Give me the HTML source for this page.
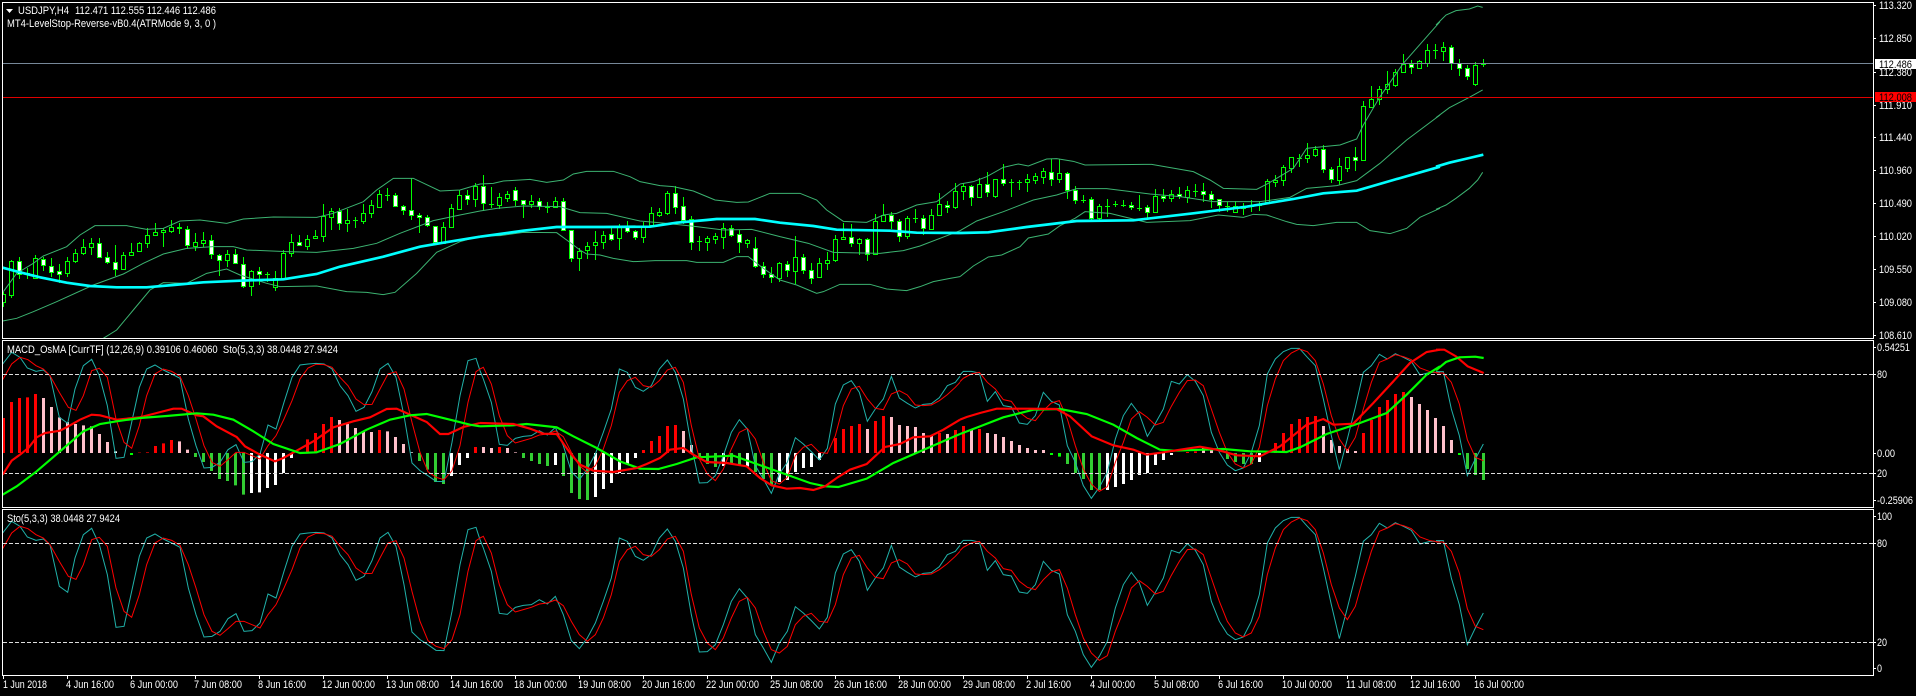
<!DOCTYPE html>
<html><head><meta charset="utf-8"><title>USDJPY,H4</title>
<style>
html,body{margin:0;padding:0;background:#000;width:1916px;height:696px;overflow:hidden}
svg{display:block}
text{font-family:"Liberation Sans",sans-serif;font-size:11px;fill:#fff}
.t{fill:none;stroke-width:3}
.b{fill:none;stroke:#3cb371;stroke-width:3}
.m{fill:none;stroke:#0ff;stroke-width:8}
.s{fill:none;stroke:#20b2aa;stroke-width:3}
.r{fill:none;stroke:#f00;stroke-width:3}
.R{fill:none;stroke:#f00;stroke-width:6.5}
.G{fill:none;stroke:#0f0;stroke-width:6.5}
.hr{stroke:#f00;stroke-width:9;fill:none}
.hp{stroke:#ffc0cb;stroke-width:9;fill:none}
.hw{stroke:#fff;stroke-width:9;fill:none}
.hg{stroke:#32cd32;stroke-width:9;fill:none}
.hb{stroke:#0f0;stroke-width:9;fill:none}
.w{stroke:#0f0;stroke-width:1;fill:none}
.cw{stroke:#0f0;stroke-width:1;fill:#fff}
.cb{stroke:#0f0;stroke-width:1;fill:#000}
.d{stroke:#ddd;stroke-width:1;stroke-dasharray:4 2;fill:none}
</style></head>
<body>
<svg width="1916" height="696" viewBox="0 0 1916 696" xmlns="http://www.w3.org/2000/svg">
<defs>
<g id="sto">
<g transform="translate(0 338) scale(.33333)">
<polyline class="s" points="8,585 35,550 60,565 82,597 108,607 130,603 150,620 178,745 203,763 225,660 250,590 275,571 298,620 322,710 348,868 372,865 395,760 418,655 440,600 465,588 490,603 515,615 540,628 565,750 588,830 612,897 636,895 660,880 684,842 708,827 732,880 756,878 780,855 804,768 828,780 852,700 876,625 900,588 924,585 948,583 972,585 996,600 1020,650 1044,680 1068,727 1092,715 1116,668 1140,600 1164,583 1188,625 1212,740 1236,882 1260,905 1284,920 1308,937 1332,938 1356,820 1380,680 1404,575 1428,568 1440,605"/>
<polyline class="r" points="8,632 35,585 60,565 84,572 108,590 130,600 150,620 178,670 205,715 228,724 250,680 275,605 298,598 322,625 348,750 372,820 395,838 418,770 440,680 465,615 490,600 515,607 540,622 565,680 588,750 612,830 636,880 660,892 684,872 708,850 732,850 756,860 780,870 804,830 828,800 852,750 876,695 900,630 924,597 948,586 972,587 996,595 1020,625 1044,650 1068,690 1092,707 1116,706 1140,660 1164,615 1188,608 1212,660 1236,760 1260,850 1284,908 1308,925 1332,932 1356,905 1380,830 1404,700 1428,608 1440,600"/>
</g>
<g transform="translate(480 338) scale(.33333)">
<polyline class="s" points="0,605 10,630 34,700 58,826 82,829 106,808 130,802 154,800 178,785 202,798 226,775 250,830 274,908 298,932 322,900 346,855 370,790 394,720 418,600 442,610 466,655 490,667 514,650 538,600 562,573 586,610 610,690 634,830 658,942 682,941 706,920 730,860 754,790 778,752 802,780 826,890 850,930 874,973 898,915 922,880 946,806 970,825 994,848 1018,873 1042,838 1066,705 1090,648 1114,635 1138,670 1162,757 1186,720 1210,690 1234,622 1258,687 1282,703 1306,717 1330,706 1354,704 1378,686 1402,650 1426,640 1440,622"/>
<polyline class="r" points="0,600 10,595 34,645 58,740 82,800 106,822 130,815 154,808 178,798 202,795 226,786 250,803 274,850 298,890 322,910 346,890 370,840 394,770 418,670 442,635 466,625 490,650 514,655 538,635 562,603 586,595 610,640 634,770 658,870 682,915 706,935 730,900 754,840 778,790 802,778 826,810 850,880 874,935 898,945 922,925 946,860 970,835 994,826 1018,850 1042,853 1066,800 1090,710 1114,660 1138,652 1162,690 1186,718 1210,722 1234,675 1258,665 1282,678 1306,708 1330,710 1354,708 1378,695 1402,677 1426,655 1440,640"/>
</g>
<g transform="translate(960 338) scale(.33333)">
<polyline class="s" points="0,618 10,607 34,607 58,612 82,697 106,668 130,710 154,714 178,762 202,766 226,740 250,670 274,697 298,708 322,830 346,880 370,950 394,988 418,955 442,910 466,810 490,740 514,703 538,735 562,802 586,763 610,720 634,637 658,645 682,617 706,637 730,680 754,790 778,850 802,888 826,905 850,897 874,850 898,770 922,615 946,570 970,548 994,538 1018,538 1042,565 1066,590 1090,690 1114,800 1138,902 1162,810 1186,715 1210,610 1234,590 1258,556 1282,570 1306,554 1330,565 1354,577 1380,618 1410,610 1440,610"/>
<polyline class="r" points="0,638 10,628 34,615 58,610 82,640 106,660 130,692 154,697 178,730 202,748 226,755 250,725 274,702 298,695 322,750 346,830 370,900 394,945 418,967 442,953 466,880 490,820 514,750 538,728 562,745 586,768 610,760 634,712 658,670 682,635 706,633 730,650 754,720 778,790 802,850 826,885 850,897 874,885 898,835 922,710 946,630 970,575 994,552 1018,540 1042,548 1066,575 1090,645 1114,740 1138,810 1162,845 1186,805 1210,720 1234,640 1258,580 1282,570 1306,557 1330,563 1354,572 1380,597 1410,608 1440,612"/>
</g>
<g transform="translate(1436 338) scale(.33333)">
<polyline class="s" points="0,608 22,608 46,720 70,800 94,920 118,870 142,825"/>
<polyline class="r" points="0,612 22,612 46,640 70,705 94,812 118,865 142,875"/>
</g>
</g>
</defs>

<rect width="1916" height="696" fill="#000"/>

<!-- candles -->
<g>
<path class="w" d="M3.5 292V307M11.5 260V298M19.5 257V279M27.5 268V279M25 273.5H30M35.5 255V279M43.5 257V271M51.5 258V277M59.5 264V283M67.5 257V277M75.5 249V263M83.5 239V255M91.5 238V255M99.5 238V257M107.5 252V264M115.5 245V276M123.5 252V269M131.5 243V256M139.5 242V252M147.5 228V248M155.5 223V236M163.5 228V247M171.5 220V233M179.5 223V234M187.5 226V249M195.5 233V251M203.5 232V247M211.5 235V259M219.5 254V276M227.5 250V267M235.5 249V264M243.5 257V288M251.5 270V296M259.5 267V285M267.5 272V282M265 274.5H270M275.5 271V291M283.5 250V278M291.5 234V257M299.5 235V246M307.5 235V250M315.5 230V239M323.5 204V242M331.5 208V230M339.5 208V230M347.5 209V232M355.5 217V228M353 220.5H358M363.5 204V224M371.5 200V218M379.5 190V207M387.5 188V201M385 195.5H390M395.5 193V207M403.5 205V215M411.5 178V220M419.5 213V233M427.5 215V227M435.5 226V243M443.5 222V243M451.5 204V227M459.5 190V210M467.5 190V205M475.5 183V207"/>
<path class="cw" d="M17.5 261.5h4v13h-4zM41.5 259.5h4v6h-4zM49.5 266.5h4v6h-4zM57.5 271.5h4v3h-4zM97.5 243.5h4v14h-4zM105.5 257.5h4v5h-4zM113.5 262.5h4v7h-4zM177.5 227.5h4v1h-4zM185.5 229.5h4v16h-4zM209.5 240.5h4v14h-4zM217.5 255.5h4v5h-4zM233.5 254.5h4v9h-4zM241.5 264.5h4v22h-4zM257.5 271.5h4v3h-4zM297.5 242.5h4v3h-4zM337.5 211.5h4v12h-4zM393.5 195.5h4v11h-4zM401.5 206.5h4v4h-4zM409.5 210.5h4v5h-4zM417.5 215.5h4v2h-4zM425.5 217.5h4v8h-4zM433.5 226.5h4v16h-4zM465.5 195.5h4v4h-4z"/>
<path class="cb" d="M1.5 294.5h4v8h-4zM9.5 261.5h4v34h-4zM33.5 258.5h4v20h-4zM65.5 261.5h4v12h-4zM73.5 253.5h4v8h-4zM81.5 247.5h4v6h-4zM89.5 243.5h4v4h-4zM121.5 255.5h4v14h-4zM129.5 252.5h4v3h-4zM137.5 243.5h4v8h-4zM145.5 235.5h4v8h-4zM153.5 232.5h4v3h-4zM161.5 230.5h4v2h-4zM169.5 227.5h4v4h-4zM193.5 242.5h4v4h-4zM201.5 240.5h4v3h-4zM225.5 254.5h4v6h-4zM249.5 271.5h4v15h-4zM273.5 278.5h4v9h-4zM281.5 253.5h4v25h-4zM289.5 242.5h4v11h-4zM305.5 239.5h4v7h-4zM313.5 236.5h4v2h-4zM321.5 216.5h4v20h-4zM329.5 211.5h4v6h-4zM345.5 220.5h4v3h-4zM361.5 213.5h4v8h-4zM369.5 205.5h4v8h-4zM377.5 194.5h4v13h-4zM441.5 227.5h4v16h-4zM449.5 208.5h4v19h-4zM457.5 195.5h4v14h-4zM473.5 186.5h4v13h-4z"/>
</g>
<g transform="translate(480 0)">
<path class="w" d="M3.5 175V211M11.5 187V208M9 204.5H14M19.5 193V209M27.5 191V202M35.5 187V206M43.5 200V218M51.5 195V208M59.5 198V210M67.5 202V213M65 207.5H70M75.5 197V207M83.5 198V231M91.5 230V262M99.5 248V271M107.5 242V259M115.5 231V260M123.5 231V249M131.5 228V241M139.5 224V250M147.5 221V233M155.5 230V240M163.5 222V243M171.5 207V227M179.5 208V217M187.5 191V215M195.5 186V214M203.5 197V224M211.5 216V250M219.5 236V251M217 241.5H222M227.5 236V251M235.5 233V244M243.5 223V249M251.5 225V237M259.5 230V253M267.5 239V248M275.5 237V268M283.5 262V278M291.5 267V283M299.5 262V282M307.5 261V277M315.5 236V284M323.5 254V274M331.5 263V284M339.5 258V277M347.5 252V270M355.5 235V262M363.5 223V239M371.5 224V247M379.5 238V255M387.5 238V261M395.5 214V255M403.5 204V222M411.5 212V229M419.5 219V242M427.5 216V239M435.5 209V223M433 218.5H438M443.5 215V235M451.5 209V230M459.5 193V216M467.5 201V213M475.5 183V209"/>
<path class="cw" d="M1.5 186.5h4v17h-4zM33.5 190.5h4v10h-4zM41.5 200.5h4v4h-4zM49.5 201.5h4v3h-4zM57.5 201.5h4v5h-4zM81.5 201.5h4v29h-4zM89.5 230.5h4v28h-4zM129.5 234.5h4v5h-4zM145.5 227.5h4v4h-4zM153.5 231.5h4v6h-4zM193.5 193.5h4v14h-4zM201.5 206.5h4v14h-4zM209.5 219.5h4v23h-4zM249.5 228.5h4v7h-4zM257.5 234.5h4v8h-4zM273.5 248.5h4v18h-4zM281.5 266.5h4v8h-4zM289.5 274.5h4v3h-4zM305.5 264.5h4v6h-4zM321.5 257.5h4v13h-4zM329.5 270.5h4v8h-4zM369.5 237.5h4v6h-4zM385.5 239.5h4v15h-4zM409.5 215.5h4v6h-4zM417.5 221.5h4v15h-4zM441.5 218.5h4v10h-4zM465.5 205.5h4v2h-4z"/>
<path class="cb" d="M17.5 197.5h4v8h-4zM25.5 194.5h4v4h-4zM49.5 201.5h4v3h-4zM73.5 201.5h4v6h-4zM97.5 251.5h4v7h-4zM105.5 246.5h4v4h-4zM113.5 242.5h4v3h-4zM121.5 235.5h4v7h-4zM137.5 227.5h4v11h-4zM161.5 226.5h4v11h-4zM169.5 213.5h4v12h-4zM177.5 212.5h4v3h-4zM185.5 193.5h4v20h-4zM225.5 238.5h4v4h-4zM233.5 236.5h4v3h-4zM241.5 228.5h4v9h-4zM265.5 240.5h4v3h-4zM297.5 263.5h4v15h-4zM313.5 257.5h4v14h-4zM337.5 263.5h4v14h-4zM345.5 260.5h4v3h-4zM353.5 239.5h4v21h-4zM361.5 237.5h4v2h-4zM377.5 239.5h4v4h-4zM393.5 221.5h4v33h-4zM401.5 215.5h4v6h-4zM425.5 218.5h4v18h-4zM449.5 215.5h4v14h-4zM457.5 204.5h4v11h-4zM473.5 191.5h4v16h-4z"/>
</g>
<g transform="translate(960 0)">
<path class="w" d="M3.5 183V200M11.5 185V206M19.5 178V197M27.5 172V197M35.5 179V198M43.5 164V186M51.5 179V197M49 182.5H54M59.5 180V190M57 182.5H62M67.5 174V192M75.5 173V184M83.5 168V184M91.5 159V186M99.5 159V183M107.5 172V199M115.5 186V204M123.5 195V203M121 200.5H126M131.5 197V220M139.5 204V220M147.5 199V217M145 206.5H150M155.5 201V207M153 204.5H158M163.5 200V207M161 205.5H166M171.5 202V210M179.5 195V211M177 208.5H182M187.5 205V220M195.5 189V213M203.5 189V202M211.5 190V202M219.5 187V199M227.5 186V203M235.5 184V197M233 191.5H238M243.5 183V202M251.5 191V208M259.5 199V212M267.5 202V212M265 206.5H270M275.5 201V213M283.5 203V215M281 208.5H286M291.5 200V212M289 206.5H294M299.5 201V211M297 205.5H302M307.5 179V203M315.5 175V187M323.5 165V186M331.5 157V173M339.5 154V167M337 158.5H342M347.5 143V163M355.5 146V157M363.5 145V173M371.5 167V183M379.5 158V185M387.5 157V172M395.5 147V171M403.5 101V160M411.5 86V107M419.5 86V105M427.5 71V94M435.5 69V87M443.5 54V73M451.5 60V74M459.5 60V69M467.5 44V67M475.5 44V59M473 50.5H478"/>
<path class="cw" d="M9.5 186.5h4v11h-4zM25.5 184.5h4v8h-4zM41.5 179.5h4v4h-4zM89.5 172.5h4v7h-4zM105.5 173.5h4v17h-4zM113.5 190.5h4v10h-4zM129.5 199.5h4v19h-4zM169.5 205.5h4v2h-4zM185.5 207.5h4v5h-4zM201.5 196.5h4v2h-4zM217.5 194.5h4v2h-4zM241.5 191.5h4v3h-4zM249.5 194.5h4v5h-4zM257.5 199.5h4v6h-4zM361.5 149.5h4v20h-4zM369.5 169.5h4v10h-4zM393.5 157.5h4v3h-4zM449.5 64.5h4v3h-4z"/>
<path class="cb" d="M1.5 186.5h4v5h-4zM17.5 184.5h4v13h-4zM33.5 179.5h4v17h-4zM65.5 179.5h4v3h-4zM73.5 176.5h4v4h-4zM81.5 171.5h4v6h-4zM97.5 173.5h4v6h-4zM137.5 206.5h4v12h-4zM193.5 196.5h4v16h-4zM209.5 194.5h4v4h-4zM225.5 190.5h4v7h-4zM273.5 206.5h4v6h-4zM305.5 181.5h4v21h-4zM313.5 180.5h4v2h-4zM321.5 167.5h4v13h-4zM329.5 157.5h4v11h-4zM345.5 155.5h4v3h-4zM353.5 149.5h4v6h-4zM377.5 166.5h4v14h-4zM385.5 157.5h4v11h-4zM401.5 106.5h4v54h-4zM409.5 99.5h4v8h-4zM417.5 89.5h4v10h-4zM425.5 84.5h4v5h-4zM433.5 72.5h4v13h-4zM441.5 64.5h4v8h-4zM457.5 61.5h4v7h-4zM465.5 50.5h4v13h-4z"/>
</g>
<g transform="translate(1440 0)">
<path class="w" d="M3.5 42V61M11.5 45V70M19.5 59V76M27.5 65V80M35.5 62V86M43.5 59V67M41 64.5H46"/>
<path class="cw" d="M9.5 47.5h4v16h-4zM17.5 63.5h4v5h-4zM25.5 68.5h4v8h-4z"/>
<path class="cb" d="M1.5 47.5h4v4h-4zM33.5 65.5h4v19h-4z"/>
</g>

<!-- Bollinger + MA -->
<g transform="scale(.33333)">
<polyline class="b" points="10,875 50,820 100,790 130,768 200,740 240,705 285,677 380,677 440,688 490,685 540,663 600,660 680,670 730,657 820,651 950,652 1000,640 1090,605 1130,570 1180,535 1240,535 1320,573 1380,570 1440,552"/>
<polyline class="b" points="8,963 50,955 100,935 170,905 280,855 370,822 430,790 490,762 560,745 640,740 700,740 740,750 860,755 950,757 1060,745 1130,730 1200,700 1300,662 1380,645 1440,633"/>
<polyline class="b" points="310,1015 350,990 400,930 450,870 490,848 560,850 620,820 680,807 720,825 800,850 840,860 950,858 1040,875 1100,877 1150,884 1185,877 1250,820 1310,757 1380,725 1440,708"/>
<polyline class="m" points="8,803 60,817 120,832 200,848 270,858 350,862 440,862 520,855 610,847 720,842 850,838 950,822 1020,800 1150,770 1260,740 1330,728 1440,710"/>
</g>
<g transform="translate(480 0) scale(.33333)">
<polyline class="b" points="0,552 40,550 70,543 150,538 200,547 250,540 280,522 320,514 400,514 450,530 480,545 540,557 580,560 640,573 705,600 770,607 805,606 870,580 960,580 1010,600 1040,630 1090,664 1160,667 1210,645 1250,640 1310,615 1370,605 1440,552"/>
<polyline class="b" points="0,633 50,625 130,618 240,620 300,638 380,640 480,663 560,670 650,680 730,690 815,688 900,710 985,730 1060,757 1200,760 1270,752 1320,738 1440,692"/>
<polyline class="b" points="0,708 60,707 130,697 230,698 260,720 300,750 320,762 360,765 400,775 460,785 525,782 620,782 650,787 730,787 770,770 805,770 850,805 900,840 950,855 1010,880 1030,875 1080,853 1170,853 1220,867 1280,872 1320,860 1360,845 1410,835 1440,830"/>
<polyline class="m" points="0,710 60,702 130,692 230,681 370,681 510,680 590,668 680,660 710,657 825,657 900,668 1000,678 1070,689 1230,692 1310,698 1440,699"/>
</g>
<g transform="translate(960 0) scale(.33333)">
<polyline class="b" points="0,552 40,545 80,530 130,502 175,492 205,498 260,477 290,476 340,484 375,495 575,493 700,515 750,540 790,565 890,568 925,550 1000,505 1040,445 1090,440 1140,435 1190,417 1210,375 1260,290 1330,190 1440,65"/>
<polyline class="b" points="0,692 50,663 130,635 220,600 290,585 350,566 440,566 570,582 660,590 760,605 900,605 990,592 1040,565 1130,557 1190,542 1260,490 1340,420 1440,345"/>
<polyline class="b" points="0,830 40,798 85,771 125,765 180,740 205,714 265,702 300,677 345,655 375,635 450,640 560,667 690,662 775,645 850,652 880,643 920,645 980,665 1010,673 1060,677 1130,667 1190,667 1230,692 1290,701 1340,685 1380,652 1440,625"/>
<polyline class="m" points="0,699 85,697 200,681 350,663 520,661 700,640 860,620 1000,597 1090,580 1190,572 1300,540 1440,500"/>
</g>
<g transform="translate(1436 0) scale(.33333)">
<polyline class="b" points="0,75 30,45 60,32 100,27 125,18 140,22"/>
<polyline class="b" points="0,353 40,323 100,292 140,270"/>
<polyline class="b" points="0,628 30,615 60,595 100,565 125,540 140,517"/>
<polyline class="m" points="0,500 40,488 100,474 142,464"/>
</g>

<rect x="3" y="63" width="1870" height="1" fill="#778899"/>
<rect x="3" y="97" width="1870" height="1" fill="#e00000"/>

<!-- histogram -->
<g transform="translate(0 338) scale(.33333)">
<path class="hr" d="M10.5 345V240M34.5 345V192M58.5 345V180M82.5 345V178M106.5 345V168M418.5 345V344M442.5 345V343M466.5 345V324M490.5 345V316M514.5 345V306M922.5 345V304M946.5 345V285M970.5 345V258M994.5 345V237M1138.5 345V276M1426.5 345V327"/>
<path class="hp" d="M130.5 345V180M154.5 345V207M178.5 345V238M202.5 345V252M226.5 345V258M250.5 345V262M274.5 345V265M298.5 345V288M322.5 345V312M538.5 345V310M562.5 345V335M1018.5 345V246M1042.5 345V258M1066.5 345V270M1090.5 345V280M1114.5 345V282M1162.5 345V280M1186.5 345V297M1210.5 345V318"/>
<path class="hw" d="M346.5 345V340M754.5 345V465M778.5 345V463M802.5 345V450M826.5 345V441M850.5 345V405M874.5 345V360M1234.5 345V343M1354.5 345V414M1378.5 345V381M1402.5 345V360"/>
<path class="hg" d="M586.5 345V357M610.5 345V372M634.5 345V399M658.5 345V423M682.5 345V429M706.5 345V442M730.5 345V470M1258.5 345V369M1282.5 345V395M1306.5 345V432M1330.5 345V438"/>
<path class="hb" d="M394.5 345V351"/>
</g>
<g transform="translate(480 338) scale(.33333)">
<path class="hr" d="M58.5 345V327M490.5 345V336M514.5 345V309M538.5 345V294M562.5 345V264M586.5 345V261M1066.5 345V300M1090.5 345V273M1114.5 345V264M1138.5 345V258M1186.5 345V249M1210.5 345V234M1378.5 345V285M1426.5 345V276"/>
<path class="hp" d="M10.5 345V327M34.5 345V330M82.5 345V330M106.5 345V343M610.5 345V279M634.5 345V321M1162.5 345V273M1234.5 345V237M1258.5 345V261M1282.5 345V264M1306.5 345V267M1330.5 345V285M1354.5 345V291M1402.5 345V288"/>
<path class="hw" d="M226.5 345V381M346.5 345V477M370.5 345V453M394.5 345V435M418.5 345V405M442.5 345V378M466.5 345V360M730.5 345V384M802.5 345V385M898.5 345V432M922.5 345V426M946.5 345V402M970.5 345V390M994.5 345V387M1018.5 345V366"/>
<path class="hg" d="M130.5 345V360M154.5 345V369M178.5 345V378M202.5 345V384M250.5 345V414M274.5 345V465M298.5 345V483M322.5 345V486M658.5 345V363M682.5 345V378M706.5 345V387M754.5 345V378M778.5 345V384M826.5 345V402M850.5 345V423M874.5 345V441"/>
</g>
<g transform="translate(960 338) scale(.33333)">
<path class="hr" d="M10.5 345V264M58.5 345V273M682.5 345V342M706.5 345V340M922.5 345V340M946.5 345V315M970.5 345V285M994.5 345V258M1018.5 345V243M1042.5 345V237M1066.5 345V234M1210.5 345V285M1234.5 345V246M1258.5 345V207M1282.5 345V186M1306.5 345V168M1330.5 345V162"/>
<path class="hp" d="M34.5 345V276M82.5 345V285M106.5 345V288M130.5 345V297M154.5 345V309M178.5 345V321M202.5 345V330M226.5 345V336M250.5 345V336M730.5 345V330M754.5 345V336M1090.5 345V264M1114.5 345V306M1138.5 345V324M1162.5 345V333M1186.5 345V339M1354.5 345V177M1378.5 345V198M1402.5 345V216M1426.5 345V240"/>
<path class="hw" d="M442.5 345V456M466.5 345V447M490.5 345V438M514.5 345V426M538.5 345V411M562.5 345V405M586.5 345V381M610.5 345V366M634.5 345V351M898.5 345V372"/>
<path class="hg" d="M322.5 345V378M346.5 345V405M370.5 345V423M394.5 345V456M418.5 345V456M802.5 345V363M826.5 345V372M850.5 345V378M874.5 345V378"/>
<path class="hb" d="M274.5 345V351M298.5 345V356"/>
</g>
<g transform="translate(1436 338) scale(.33333)">
<path class="hp" d="M22.5 345V264M46.5 345V306M-1.5 345V240"/>
<path class="hb" d="M70.5 345V351"/>
<path class="hg" d="M94.5 345V393M118.5 345V411M142.5 345V426"/>
</g>

<!-- stochastic -->
<use href="#sto" y="-169"/>
<use href="#sto"/>

<!-- dashed levels -->
<path class="d" d="M3 374.5H1873M3 473.5H1873M3 543.5H1873M3 642.5H1873"/>

<!-- MACD lines -->
<g transform="translate(0 338) scale(.33333)">
<polyline class="R" points="8,410 35,368 60,350 85,330 110,298 135,285 180,278 205,265 240,245 275,230 300,232 350,245 420,238 470,225 520,212 545,212 590,232 610,235 650,265 710,297 735,325 780,350 825,370 850,360 890,338 940,310 1000,268 1060,250 1110,238 1160,213 1190,212 1230,230 1280,252 1320,288 1345,288 1390,267 1440,255"/>
<polyline class="G" points="8,470 50,445 110,400 180,340 250,280 300,258 350,250 420,240 500,234 590,226 640,230 700,245 760,280 820,318 900,345 950,343 1020,318 1100,275 1170,245 1230,232 1280,228 1350,245 1410,260 1440,265"/>
</g>
<g transform="translate(480 338) scale(.33333)">
<polyline class="G" points="0,265 100,262 140,258 230,268 280,295 350,330 420,370 480,392 535,393 590,378 650,358 760,353 830,378 920,410 990,435 1035,445 1075,447 1160,422 1240,375 1320,340 1440,288"/>
<polyline class="R" points="0,255 100,258 150,272 190,287 230,288 270,345 300,380 340,398 400,402 470,390 500,378 540,360 570,335 610,330 640,350 680,372 740,375 800,385 840,420 875,442 920,452 960,450 1000,456 1035,445 1070,420 1110,395 1160,378 1215,327 1260,318 1300,298 1350,295 1390,275 1440,245"/>
</g>
<g transform="translate(960 338) scale(.33333)">
<polyline class="G" points="0,288 60,265 130,238 220,215 300,213 380,228 460,260 530,300 600,335 640,338 790,333 870,340 980,342 1020,328 1100,288 1200,255 1280,225 1340,170 1400,110 1440,85"/>
<polyline class="R" points="0,245 20,237 60,225 110,212 200,212 290,213 330,235 395,295 460,322 520,335 560,350 610,343 680,332 720,326 770,335 830,352 900,355 960,325 1040,260 1090,243 1120,260 1180,257 1240,195 1300,130 1350,75 1400,42 1440,35"/>
</g>
<g transform="translate(1436 338) scale(.33333)">
<polyline class="R" points="0,35 25,35 60,55 95,85 143,105"/>
<polyline class="G" points="0,97 30,72 70,58 118,56 143,60"/>
</g>

<!-- frames -->
<rect x="0" y="0" width="2" height="696" fill="#000"/>
<g fill="none" stroke="#fff" stroke-width="1">
<path d="M2.5 2.5H1873.5V338.5H2.5Z"/>
<path d="M2.5 340.5H1873.5V507.5H2.5Z"/>
<path d="M2.5 509.5H1873.5V675.5H2.5Z"/>
<path d="M1873 5.5h3M1873 38.5h3M1873 72.5h3M1873 105.5h3M1873 137.5h3M1873 170.5h3M1873 203.5h3M1873 236.5h3M1873 269.5h3M1873 302.5h3M1873 335.5h3M1873 347.5h3M1873 374.5h3M1873 453.5h3M1873 473.5h3M1873 500.5h3M1873 516.5h3M1873 543.5h3M1873 642.5h3M1873 668.5h3"/>
<path d="M3.5 675V679M67.5 675V679M131.5 675V679M195.5 675V679M259.5 675V679M323.5 675V679M387.5 675V679M451.5 675V679M515.5 675V679M579.5 675V679M643.5 675V679M707.5 675V679M771.5 675V679M835.5 675V679M899.5 675V679M963.5 675V679M1027.5 675V679M1091.5 675V679M1155.5 675V679M1219.5 675V679M1283.5 675V679M1347.5 675V679M1411.5 675V679M1475.5 675V679"/>
</g>

<!-- chart labels -->
<polygon points="6,9 13,9 9.5,13" fill="#fff"/>
<text x="18" y="14" textLength="51" lengthAdjust="spacingAndGlyphs">USDJPY,H4</text>
<text x="75" y="14" textLength="141" lengthAdjust="spacingAndGlyphs">112.471 112.555 112.446 112.486</text>
<text x="7" y="27" textLength="209" lengthAdjust="spacingAndGlyphs">MT4-LevelStop-Reverse-vB0.4(ATRMode 9, 3, 0 )</text>
<text x="7" y="353" textLength="331" lengthAdjust="spacingAndGlyphs" xml:space="preserve">MACD_OsMA [CurrTF] (12,26,9) 0.39106 0.46060  Sto(5,3,3) 38.0448 27.9424</text>
<text x="7" y="522" textLength="113" lengthAdjust="spacingAndGlyphs">Sto(5,3,3) 38.0448 27.9424</text>

<!-- price axis -->
<g>
<text x="1879" y="9" textLength="33" lengthAdjust="spacingAndGlyphs">113.320</text>
<text x="1879" y="42" textLength="33" lengthAdjust="spacingAndGlyphs">112.850</text>
<text x="1879" y="76" textLength="33" lengthAdjust="spacingAndGlyphs">112.380</text>
<text x="1879" y="109" textLength="33" lengthAdjust="spacingAndGlyphs">111.910</text>
<text x="1879" y="141" textLength="33" lengthAdjust="spacingAndGlyphs">111.440</text>
<text x="1879" y="174" textLength="33" lengthAdjust="spacingAndGlyphs">110.960</text>
<text x="1879" y="207" textLength="33" lengthAdjust="spacingAndGlyphs">110.490</text>
<text x="1879" y="240" textLength="33" lengthAdjust="spacingAndGlyphs">110.020</text>
<text x="1879" y="273" textLength="33" lengthAdjust="spacingAndGlyphs">109.550</text>
<text x="1879" y="306" textLength="33" lengthAdjust="spacingAndGlyphs">109.080</text>
<text x="1879" y="339" textLength="33" lengthAdjust="spacingAndGlyphs">108.610</text>
<rect x="1875" y="59" width="41" height="10" fill="#fff"/>
<text x="1879" y="68" textLength="33" lengthAdjust="spacingAndGlyphs" style="fill:#000">112.486</text>
<rect x="1875" y="92" width="41" height="10" fill="#f00"/>
<text x="1879" y="101" textLength="33" lengthAdjust="spacingAndGlyphs" style="fill:#000">112.008</text>
<text x="1877" y="351" textLength="33" lengthAdjust="spacingAndGlyphs">0.54251</text>
<text x="1877" y="378" textLength="10" lengthAdjust="spacingAndGlyphs">80</text>
<text x="1877" y="457" textLength="18" lengthAdjust="spacingAndGlyphs">0.00</text>
<text x="1877" y="477" textLength="10" lengthAdjust="spacingAndGlyphs">20</text>
<text x="1877" y="504" textLength="36" lengthAdjust="spacingAndGlyphs">-0.25906</text>
<text x="1877" y="520" textLength="15" lengthAdjust="spacingAndGlyphs">100</text>
<text x="1877" y="547" textLength="10" lengthAdjust="spacingAndGlyphs">80</text>
<text x="1877" y="646" textLength="10" lengthAdjust="spacingAndGlyphs">20</text>
<text x="1877" y="672" textLength="5" lengthAdjust="spacingAndGlyphs">0</text>
</g>

<!-- time axis -->
<g>
<text x="3" y="688" textLength="44" lengthAdjust="spacingAndGlyphs">1 Jun 2018</text>
<text x="66" y="688" textLength="48" lengthAdjust="spacingAndGlyphs">4 Jun 16:00</text>
<text x="130" y="688" textLength="48" lengthAdjust="spacingAndGlyphs">6 Jun 00:00</text>
<text x="194" y="688" textLength="48" lengthAdjust="spacingAndGlyphs">7 Jun 08:00</text>
<text x="258" y="688" textLength="48" lengthAdjust="spacingAndGlyphs">8 Jun 16:00</text>
<text x="322" y="688" textLength="53" lengthAdjust="spacingAndGlyphs">12 Jun 00:00</text>
<text x="386" y="688" textLength="53" lengthAdjust="spacingAndGlyphs">13 Jun 08:00</text>
<text x="450" y="688" textLength="53" lengthAdjust="spacingAndGlyphs">14 Jun 16:00</text>
<text x="514" y="688" textLength="53" lengthAdjust="spacingAndGlyphs">18 Jun 00:00</text>
<text x="578" y="688" textLength="53" lengthAdjust="spacingAndGlyphs">19 Jun 08:00</text>
<text x="642" y="688" textLength="53" lengthAdjust="spacingAndGlyphs">20 Jun 16:00</text>
<text x="706" y="688" textLength="53" lengthAdjust="spacingAndGlyphs">22 Jun 00:00</text>
<text x="770" y="688" textLength="53" lengthAdjust="spacingAndGlyphs">25 Jun 08:00</text>
<text x="834" y="688" textLength="53" lengthAdjust="spacingAndGlyphs">26 Jun 16:00</text>
<text x="898" y="688" textLength="53" lengthAdjust="spacingAndGlyphs">28 Jun 00:00</text>
<text x="963" y="688" textLength="52" lengthAdjust="spacingAndGlyphs">29 Jun 08:00</text>
<text x="1026" y="688" textLength="45" lengthAdjust="spacingAndGlyphs">2 Jul 16:00</text>
<text x="1090" y="688" textLength="45" lengthAdjust="spacingAndGlyphs">4 Jul 00:00</text>
<text x="1154" y="688" textLength="45" lengthAdjust="spacingAndGlyphs">5 Jul 08:00</text>
<text x="1218" y="688" textLength="45" lengthAdjust="spacingAndGlyphs">6 Jul 16:00</text>
<text x="1282" y="688" textLength="50" lengthAdjust="spacingAndGlyphs">10 Jul 00:00</text>
<text x="1346" y="688" textLength="50" lengthAdjust="spacingAndGlyphs">11 Jul 08:00</text>
<text x="1410" y="688" textLength="50" lengthAdjust="spacingAndGlyphs">12 Jul 16:00</text>
<text x="1474" y="688" textLength="50" lengthAdjust="spacingAndGlyphs">16 Jul 00:00</text>
</g>
</svg>
</body></html>
